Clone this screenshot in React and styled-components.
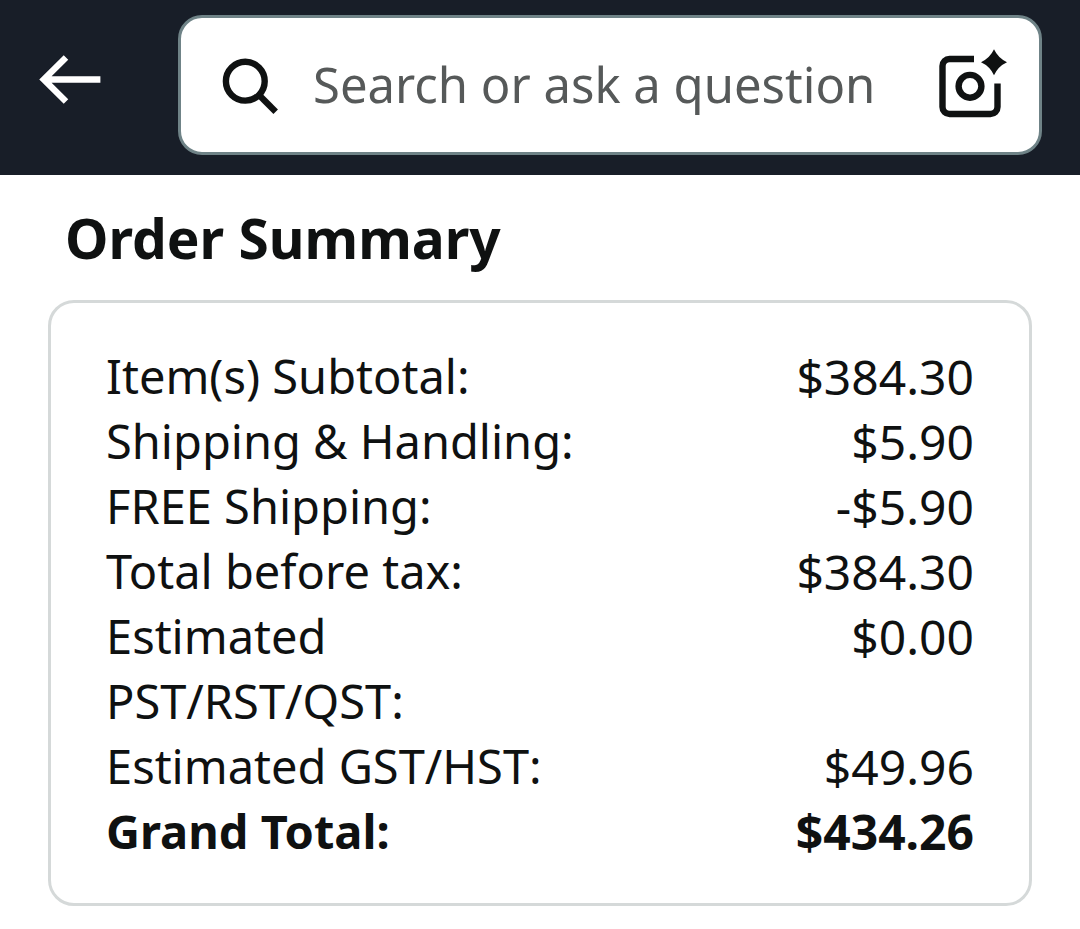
import React from 'react';
import styled, { createGlobalStyle } from 'styled-components';

const GlobalStyle = createGlobalStyle`
    * {
        box-sizing: border-box;
    }

    body {
        margin: 0;
        background: white;
        color: #0f1111;
        font-family: 'Noto Sans', 'Open Sans', sans-serif;
    }
`;

const Header = styled.header`
    /* layout */
    display: flex;
    align-items: center;
    gap: 76px;
    padding: 15px 38px 20px;

    /* color */
    background: #181e28;
`;

const IconButton = styled.button`
    display: flex;
    flex: none;
    padding: 0;
    border: none;
    background: none;
    color: ${props => props.$color};
    cursor: pointer;
`;

const SearchBox = styled.form`
    /* layout */
    flex: 1;
    min-width: 0;
    height: 140px;
    display: flex;
    align-items: center;
    gap: 34px;
    padding: 0 31px 2px 38px;

    /* color */
    background: white;
    border: 3px solid #6f8387;
    border-radius: 24px;
`;

const SearchInput = styled.input`
    flex: 1;
    min-width: 0;
    padding: 0;
    border: none;
    outline: none;
    background: none;
    color: #0f1111;
    font-family: inherit;
    font-size: 49px;

    &::placeholder {
        color: #565959;
        opacity: 1;
    }
`;

const Main = styled.main`
    padding: 23px 48px;
`;

const Title = styled.h1`
    margin: 0 0 22px;
    padding: 0 17px;
    font-size: 55px;
    font-weight: 700;
    line-height: 80px;
`;

const Card = styled.section`
    padding: 41px 55px 39px;
    border: 3px solid #d5d9d9;
    border-radius: 26px;
`;

const Table = styled.table`
    width: 100%;
    border-collapse: collapse;
    line-height: 65px;
`;

const Row = styled.tr`
    font-weight: ${props => (props.$total ? 700 : 400)};
`;

const Label = styled.th`
    width: 57%;
    padding: 0;
    font-size: 47px;
    font-weight: inherit;
    text-align: left;
    vertical-align: top;
`;

const Amount = styled.td`
    padding: 0;
    font-size: 48px;
    text-align: right;
    vertical-align: top;
`;

const BackIcon = () => (
    <svg width="64" height="64" viewBox="0 0 64 64" fill="none" stroke="currentColor" strokeWidth="6.4" aria-hidden="true">
        <path d="M28 4.500L5.800 26.500l22.200 22M6 26.500h56.400"/>
    </svg>
);

const SearchIcon = () => (
    <svg width="60" height="60" viewBox="0 0 60 60" fill="none" stroke="currentColor" strokeWidth="6.4" aria-hidden="true">
        <circle cx="26.300" cy="27.200" r="19.4"/>
        <path d="M40 41L56.700 57.700"/>
    </svg>
);

const CameraIcon = () => (
    <svg width="70" height="70" viewBox="0 0 70 70" aria-hidden="true">
        <g fill="none" stroke="currentColor" strokeWidth="6.4">
            <path d="M36 10H11.5a7 7 0 0 0-7 7v41a7 7 0 0 0 7 7h41a7 7 0 0 0 7-7V34.5"/>
            <circle cx="32" cy="37.3" r="11.4"/>
        </g>
        <path fill="currentColor" d="M56 0.300Q60 9 69 13.200Q60 17.300 56 26.300Q52 17.300 43 13.200Q52 9 56 0.300Z"/>
    </svg>
);

const items = [
    { label: 'Item(s) Subtotal:', amount: '$384.30' },
    { label: 'Shipping & Handling:', amount: '$5.90' },
    { label: 'FREE Shipping:', amount: '-$5.90' },
    { label: 'Total before tax:', amount: '$384.30' },
    { label: 'Estimated PST/RST/QST:', amount: '$0.00' },
    { label: 'Estimated GST/HST:', amount: '$49.96' },
    { label: 'Grand Total:', amount: '$434.26', total: true }
];

const SummaryRow = ({ item: { label, amount, total } }) => (
    <Row $total={total}>
        <Label scope="row">{label}</Label>
        <Amount>{amount}</Amount>
    </Row>
);

const App = () => (
    <>
        <GlobalStyle/>
        <Header>
            <IconButton type="button" $color="white" aria-label="Back">
                <BackIcon/>
            </IconButton>
            <SearchBox role="search" onSubmit={e => e.preventDefault()}>
                <IconButton type="submit" $color="#0f1111" aria-label="Search">
                    <SearchIcon/>
                </IconButton>
                <SearchInput
                    type="text"
                    name="query"
                    aria-label="Search or ask a question"
                    placeholder="Search or ask a question"
                />
                <IconButton type="button" $color="#0f1111" aria-label="Search by photo">
                    <CameraIcon/>
                </IconButton>
            </SearchBox>
        </Header>
        <Main>
            <Title>Order Summary</Title>
            <Card>
                <Table>
                    <tbody>
                        {items.map(item => <SummaryRow key={item.label} item={item}/>)}
                    </tbody>
                </Table>
            </Card>
        </Main>
    </>
);

export default App;
